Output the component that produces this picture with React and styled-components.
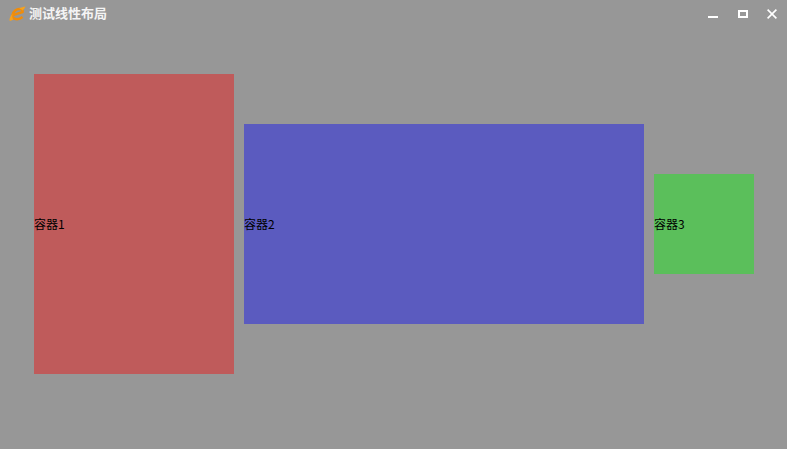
import styled, { createGlobalStyle } from "styled-components";

const GlobalStyle = createGlobalStyle`
  html, body {
    margin: 0;
    padding: 0;
    height: 100%;
  }
  body {
    background: #979797;
    overflow: hidden;
  }
`;

function App() {
  return (
    <>
      <GlobalStyle />
      <Window>
        <TitleBar>
          <TitleLeft>
            <LogoIcon width="17" height="15" viewBox="0 0 17 15">
              <path
                d="M2.5 9.6L13.6 6C14.4 3 9.4 2 6.2 4.5C3.2 7 2.8 11 5 12.4C7.6 13.8 11 13 13.6 11"
                stroke="#f08c0a"
                strokeWidth="2.4"
                fill="none"
              />
              <path
                d="M.4 14.6C.4 12.4 1.6 10 3.6 7.6C3 10 3.2 12 4.2 13.4C2.8 14.4 1.2 14.9.4 14.6zM10 2.6C12 1.5 14.4.7 16.6.5C15.8 2 14.8 3.4 13.6 4.6C12.8 3.6 11.4 2.9 10 2.6z"
                fill="#f7a21d"
              />
            </LogoIcon>
            <Title>测试线性布局</Title>
          </TitleLeft>
          <Controls>
            <MinButton />
            <MaxButton />
            <CloseButton>
              <svg width="10" height="10" viewBox="0 0 10 10">
                <path d="M.6.6l8.8 8.8M9.4.6L.6 9.4" stroke="#fff" strokeWidth="1.6" fill="none" />
              </svg>
            </CloseButton>
          </Controls>
        </TitleBar>
        <Content>
          <Box color="#bf5b5b" w={200} h={300}>容器1</Box>
          <Box color="#5b5bbf" w={400} h={200}>容器2</Box>
          <Box color="#5bbf5b" w={100} h={100}>容器3</Box>
        </Content>
      </Window>
    </>
  );
}

const Window = styled.div`
  width: 787px;
  height: 449px;
  display: flex;
  flex-direction: column;
  background: #979797;
`;

const TitleBar = styled.div`
  height: 27px;
  display: flex;
  align-items: center;
  justify-content: space-between;
  padding: 0 10px 0 9px;
`;

const TitleLeft = styled.div`
  display: flex;
  align-items: center;
  gap: 3px;
  padding-bottom: 2px;
`;

const LogoIcon = styled.svg`
  flex-shrink: 0;
  margin-top: 2px;
`;

const Title = styled.span`
  font-family: "Noto Sans CJK SC", sans-serif;
  font-size: 13px;
  line-height: 18px;
  font-weight: 700;
  color: #f4f4f4;
`;

const Controls = styled.div`
  display: flex;
  align-items: center;
  gap: 19px;
`;

const MinButton = styled.div`
  width: 10px;
  height: 2px;
  margin: 6px 1px 0 0;
  background: #fff;
`;

const MaxButton = styled.div`
  box-sizing: border-box;
  width: 10px;
  height: 8px;
  border: 2px solid #fff;
`;

const CloseButton = styled.div`
  display: flex;
  width: 10px;
  height: 10px;
`;

const Content = styled.div`
  flex: 1;
  display: flex;
  align-items: center;
  gap: 10px;
  padding: 0 0 28px 34px;
`;

const Box = styled.div`
  width: ${({ w }) => w}px;
  height: ${({ h }) => h}px;
  flex-shrink: 0;
  display: flex;
  align-items: center;
  padding-bottom: 2px;
  box-sizing: border-box;
  background: ${({ color }) => color};
  font-family: "Noto Sans CJK SC", sans-serif;
  font-size: 12px;
  color: #000;
`;

export default App;
